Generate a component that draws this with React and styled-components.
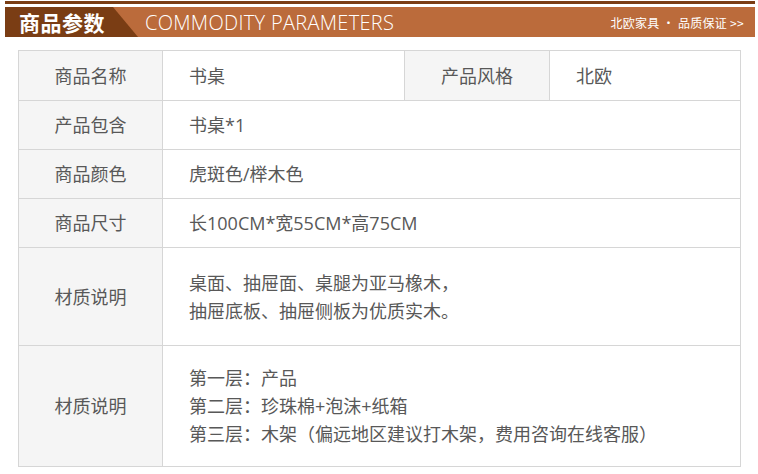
import React from 'react';
import styled, { createGlobalStyle } from 'styled-components';

const GlobalStyle = createGlobalStyle`
  html, body {
    margin: 0;
    padding: 0;
    background: #ffffff;
  }
  body {
    font-family: 'Noto Sans CJK SC', 'Noto Sans', sans-serif;
  }
`;

const Page = styled.div`
  width: 758px;
  height: 474px;
  overflow: hidden;
`;

const TopLine = styled.div`
  margin: 1px 3px 0 5px;
  height: 3px;
  background: #7a3d14;
`;

const Banner = styled.div`
  margin: 3px 3px 0 5px;
  height: 30px;
  display: flex;
  align-items: center;
  background: #bb6b3b;
  color: #ffffff;
`;

const TitleBlock = styled.div`
  width: 133px;
  height: 100%;
  flex-shrink: 0;
  display: flex;
  align-items: center;
  padding-left: 14px;
  box-sizing: border-box;
  background: #7a3d14;
  clip-path: polygon(0 0, 108px 0, 133px 100%, 0 100%);
  font-family: 'Noto Sans CJK SC', sans-serif;
  font-weight: 700;
  font-size: 21px;
  letter-spacing: 0.5px;
`;

const EnTitle = styled.div`
  margin-left: 7px;
  font-family: 'Open Sans', 'Liberation Sans', sans-serif;
  font-weight: 300;
  font-size: 20px;
  letter-spacing: 0.3px;
`;

const Slogan = styled.div`
  margin-left: auto;
  padding-right: 11px;
  font-family: 'Noto Sans CJK SC', sans-serif;
  font-size: 12px;
  letter-spacing: 0.3px;
`;

const Table = styled.div`
  margin: 13px 17px 0 18px;
  border-top: 1px solid #d6d6d6;
  border-left: 1px solid #d6d6d6;
  color: #585858;
  font-family: 'Open Sans', 'Noto Sans CJK SC', sans-serif;
  font-size: 18px;
`;

const Row = styled.div`
  display: grid;
  grid-template-columns: ${p => (p.$split ? '144px 242px 145px 1fr' : '144px 1fr')};
  height: ${p => p.$h}px;
`;

const Cell = styled.div`
  display: flex;
  flex-direction: column;
  justify-content: center;
  border-right: 1px solid #d6d6d6;
  border-bottom: 1px solid #d6d6d6;
  line-height: 28px;
  ${p =>
    p.$label
      ? `
    align-items: center;
    background: #f5f5f5;
  `
      : `
    padding-left: 26px;
    background: #ffffff;
  `}
`;

const rows = [
  { label: '产品包含', h: 49, lines: ['书桌*1'] },
  { label: '商品颜色', h: 49, lines: ['虎斑色/榉木色'] },
  { label: '商品尺寸', h: 49, lines: ['长100CM*宽55CM*高75CM'] },
  {
    label: '材质说明',
    h: 98,
    lines: ['桌面、抽屉面、桌腿为亚马橡木，', '抽屉底板、抽屉侧板为优质实木。'],
  },
  {
    label: '材质说明',
    h: 121,
    lines: [
      '第一层：产品',
      '第二层：珍珠棉+泡沫+纸箱',
      '第三层：木架（偏远地区建议打木架，费用咨询在线客服）',
    ],
  },
];

export default function App() {
  return (
    <Page>
      <GlobalStyle />
      <TopLine />
      <Banner>
        <TitleBlock>商品参数</TitleBlock>
        <EnTitle>COMMODITY PARAMETERS</EnTitle>
        <Slogan>北欧家具 · 品质保证 &gt;&gt;</Slogan>
      </Banner>
      <Table>
        <Row $split $h={50}>
          <Cell $label>商品名称</Cell>
          <Cell>书桌</Cell>
          <Cell $label>产品风格</Cell>
          <Cell>北欧</Cell>
        </Row>
        {rows.map((r, i) => (
          <Row key={i} $h={r.h}>
            <Cell $label>{r.label}</Cell>
            <Cell>
              {r.lines.map((l, j) => (
                <div key={j}>{l}</div>
              ))}
            </Cell>
          </Row>
        ))}
      </Table>
    </Page>
  );
}
